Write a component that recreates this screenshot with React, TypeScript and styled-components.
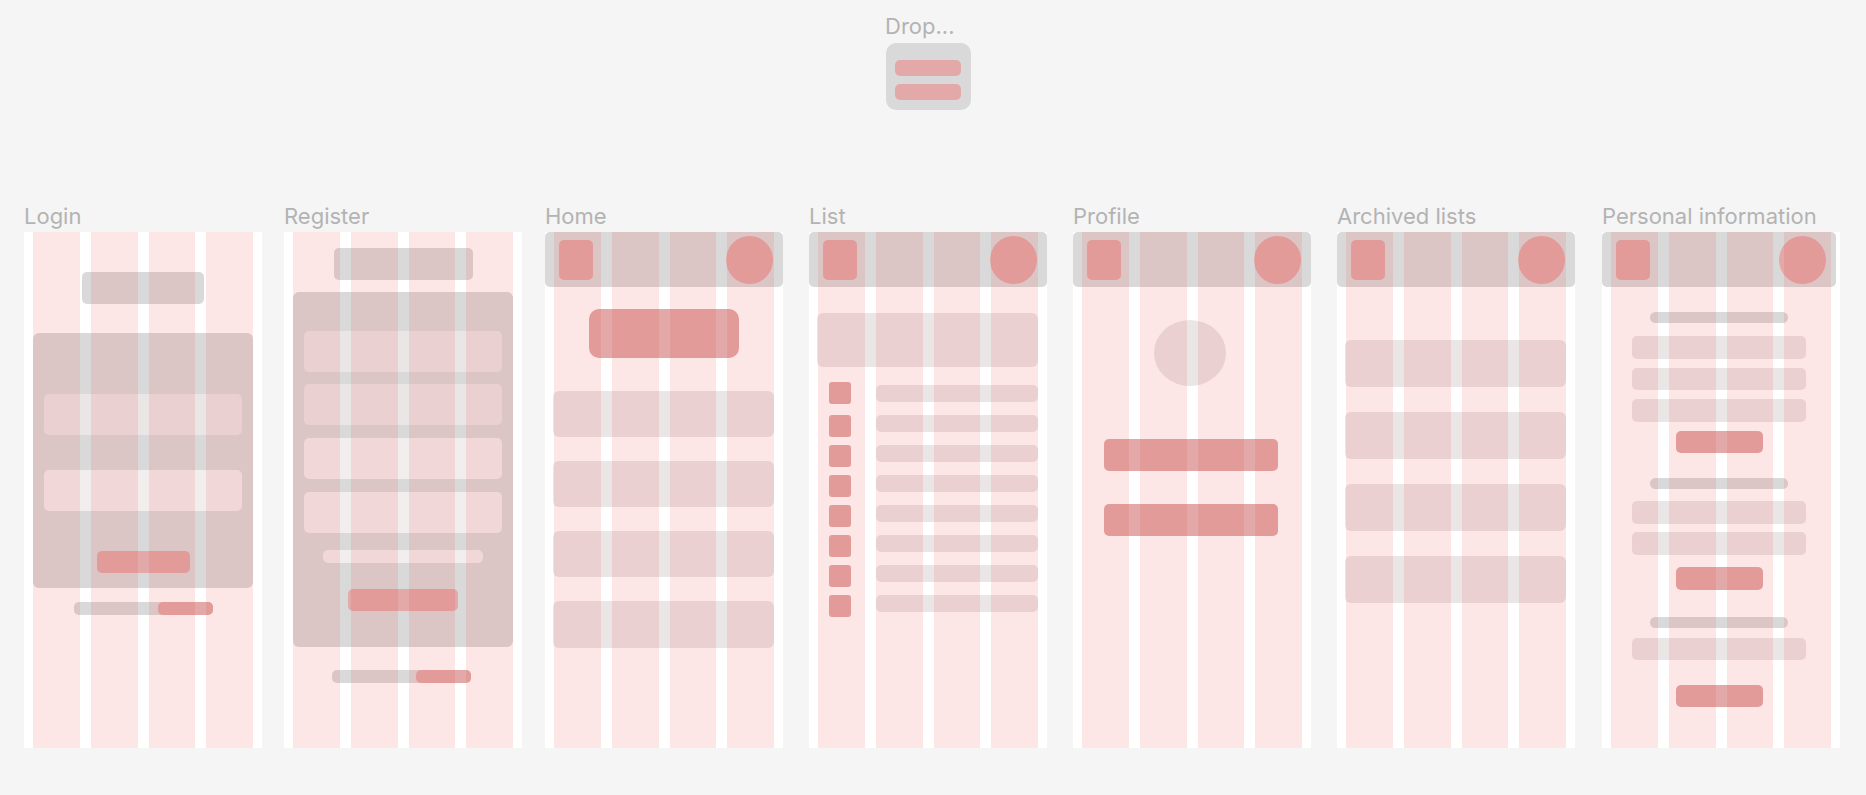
import React from 'react';
import styled, { createGlobalStyle } from 'styled-components';

const GRAY = '#d9d9d9';
const RED = '#e3a9a8';
const SOFT = '#ebe6e6';
const PALE = '#f3eeee';

const GlobalStyle = createGlobalStyle`
  html, body {
    margin: 0;
    background: #f5f5f5;
  }
  body {
    font-family: Inter, "Noto Sans", sans-serif;
  }
  * { box-sizing: border-box; }
`;

const Canvas = styled.div`
  min-height: 100vh;
  padding-top: 13px;
`;

const Label = styled.div`
  font-size: 22px;
  line-height: 26px;
  color: #b3b3b3;
  white-space: nowrap;
`;

const DropArea = styled.div`
  display: flex;
  flex-direction: column;
  align-items: flex-start;
  padding-left: 885px;
`;

const DropBox = styled.div`
  margin: 4px 0 0 1px;
  width: 85px;
  height: 67px;
  border-radius: 10px;
  background: ${GRAY};
  padding: 17px 10px 0 9px;
  display: flex;
  flex-direction: column;
  gap: 8px;
`;

const DropBar = styled.div`
  height: 16px;
  border-radius: 5px;
  background: ${RED};
`;

const ArtboardRow = styled.div`
  display: flex;
  align-items: flex-start;
  margin-top: 93px;
  padding-left: 24px;
`;

const Artboard = styled.div<{ $offset: number }>`
  width: 238px;
  flex-shrink: 0;
  margin-left: ${p => p.$offset}px;
  display: flex;
  flex-direction: column;
  gap: 3px;
`;

const Frame = styled.div<{ $center?: boolean }>`
  position: relative;
  width: 238px;
  height: 516px;
  background: #fff;
  overflow: hidden;
  display: flex;
  flex-direction: column;
  align-items: ${p => (p.$center ? 'center' : 'stretch')};
  padding-right: ${p => (p.$center ? 4 : 0)}px;
  & > * { flex-shrink: 0; }
`;

// layout grid drawn over the frame content, like the design tool does
const GridOverlay = styled.div`
  position: absolute;
  inset: 0;
  display: grid;
  grid-template-columns: repeat(4, 1fr);
  column-gap: 11px;
  padding: 0 9px;
  pointer-events: none;
`;

const GridColumn = styled.div`
  background: rgba(230, 60, 60, 0.13);
`;

const Header = styled.div`
  align-self: stretch;
  height: 55px;
  border-radius: 5px;
  background: ${GRAY};
  display: flex;
  align-items: center;
  justify-content: space-between;
  padding: 0 10px 0 14px;
`;

const MenuTile = styled.div`
  width: 34px;
  height: 40px;
  border-radius: 5px;
  background: ${RED};
`;

const Avatar = styled.div`
  width: 47px;
  height: 48px;
  border-radius: 50%;
  background: ${RED};
`;

const TitleBar = styled.div<{ $mt: number; $w: number }>`
  align-self: center;
  margin-top: ${p => p.$mt}px;
  width: ${p => p.$w}px;
  height: 32px;
  border-radius: 5px;
  background: ${GRAY};
`;

const Panel = styled.div<{ $mt: number; $h: number }>`
  margin: ${p => p.$mt}px 9px 0;
  height: ${p => p.$h}px;
  border-radius: 6px;
  background: ${GRAY};
  padding: 0 11px;
  display: flex;
  flex-direction: column;
  align-items: center;
  & > * { flex-shrink: 0; }
`;

const Field = styled.div<{ $mt: number; $pale?: boolean }>`
  align-self: stretch;
  margin-top: ${p => p.$mt}px;
  height: 41px;
  border-radius: 5px;
  background: ${p => (p.$pale ? PALE : SOFT)};
`;

const Hint = styled.div<{ $mt: number }>`
  margin-top: ${p => p.$mt}px;
  width: 160px;
  height: 12.8px;
  border-radius: 5px;
  background: ${PALE};
`;

const Button = styled.div<{ $mt: number; $w: number; $h: number; $ml?: number; $r?: number }>`
  align-self: ${p => (p.$ml === undefined ? 'center' : 'flex-start')};
  margin-top: ${p => p.$mt}px;
  margin-left: ${p => p.$ml ?? 0}px;
  width: ${p => p.$w}px;
  height: ${p => p.$h}px;
  border-radius: ${p => p.$r ?? 5}px;
  background: ${RED};
`;

const LinkBar = styled.div<{ $mt: number; $shift?: number }>`
  align-self: center;
  margin-top: ${p => p.$mt}px;
  margin-left: ${p => -(p.$shift ?? 0) * 2}px;
  width: 139px;
  height: 13.4px;
  border-radius: 5px;
  background: ${GRAY};
  display: flex;
  justify-content: flex-end;
`;

const LinkAccent = styled.div`
  width: 55px;
  border-radius: 5px;
  background: ${RED};
`;

const ListCard = styled.div<{ $mt: number; $h: number }>`
  margin: ${p => p.$mt}px 9px 0 8px;
  height: ${p => p.$h}px;
  border-radius: 6px;
  background: ${SOFT};
`;

const Rows = styled.div`
  margin-top: 17.5px;
  padding: 0 9px 0 20px;
  display: flex;
  flex-direction: column;
  gap: 8px;
`;

const ItemRow = styled.div<{ $lead?: boolean }>`
  height: 22px;
  display: flex;
  align-items: flex-start;
  gap: 25px;
  & > :first-child {
    margin-top: ${p => (p.$lead ? -2.5 : 0)}px;
  }
`;

const Checkbox = styled.div`
  width: 22px;
  height: 22px;
  flex-shrink: 0;
  border-radius: 3px;
  background: ${RED};
`;

const ItemLine = styled.div`
  flex: 1;
  height: 17px;
  border-radius: 5px;
  background: ${SOFT};
`;

const Portrait = styled.div`
  align-self: flex-start;
  margin: 33px 0 0 81px;
  width: 72px;
  height: 66px;
  border-radius: 50%;
  background: ${SOFT};
`;

const Caption = styled.div<{ $mt: number }>`
  margin-top: ${p => p.$mt}px;
  width: 138px;
  height: 11.3px;
  border-radius: 6px;
  background: ${GRAY};
`;

const InfoField = styled.div<{ $mt: number }>`
  margin-top: ${p => p.$mt}px;
  width: 174px;
  height: 22.5px;
  border-radius: 5px;
  background: ${SOFT};
`;

const Grid = () => (
  <GridOverlay>
    <GridColumn />
    <GridColumn />
    <GridColumn />
    <GridColumn />
  </GridOverlay>
);

const AppHeader = () => (
  <Header>
    <MenuTile />
    <Avatar />
  </Header>
);

const Login = () => (
  <>
    <TitleBar $mt={40} $w={122} />
    <Panel $mt={29} $h={254.6}>
      <Field $mt={60.7} />
      <Field $mt={35.4} $pale />
      <Button $mt={40} $w={93} $h={21.5} />
    </Panel>
    <LinkBar $mt={14.3}>
      <LinkAccent />
    </LinkBar>
  </>
);

const Register = () => (
  <>
    <TitleBar $mt={16.1} $w={139} />
    <Panel $mt={12.1} $h={354.6}>
      <Field $mt={38.6} />
      <Field $mt={12.5} />
      <Field $mt={12.5} $pale />
      <Field $mt={12.8} $pale />
      <Hint $mt={17.9} />
      <Button $mt={26.1} $w={110} $h={21.8} />
    </Panel>
    <LinkBar $mt={22.9} $shift={1.3}>
      <LinkAccent />
    </LinkBar>
  </>
);

const Home = () => (
  <>
    <AppHeader />
    <Button $mt={21.5} $w={150} $h={49} $r={10} />
    <ListCard $mt={33.6} $h={46.4} />
    <ListCard $mt={23.6} $h={46.4} />
    <ListCard $mt={23.6} $h={46.4} />
    <ListCard $mt={24} $h={46.4} />
  </>
);

const List = () => (
  <>
    <AppHeader />
    <ListCard $mt={25.8} $h={54.6} />
    <Rows>
      {Array.from({ length: 8 }).map((_, i) => (
        <ItemRow key={i} $lead={i === 0}>
          <Checkbox />
          <ItemLine />
        </ItemRow>
      ))}
    </Rows>
  </>
);

const Profile = () => (
  <>
    <AppHeader />
    <Portrait />
    <Button $mt={53.2} $ml={31} $w={174} $h={32} />
    <Button $mt={32.9} $ml={31} $w={174} $h={32} />
  </>
);

const Archived = () => (
  <>
    <AppHeader />
    <ListCard $mt={52.9} $h={46.8} />
    <ListCard $mt={25.3} $h={46.8} />
    <ListCard $mt={25.3} $h={46.8} />
    <ListCard $mt={25.4} $h={46.8} />
  </>
);

const Personal = () => (
  <>
    <AppHeader />
    <Caption $mt={25} />
    <InfoField $mt={12.9} />
    <InfoField $mt={9.3} />
    <InfoField $mt={8.9} />
    <Button $mt={9.2} $w={87} $h={22.2} />
    <Caption $mt={24.6} />
    <InfoField $mt={12.2} />
    <InfoField $mt={8.6} />
    <Button $mt={12.5} $w={87} $h={22.2} />
    <Caption $mt={27.5} />
    <InfoField $mt={9.3} />
    <Button $mt={24.3} $w={87} $h={22.2} />
  </>
);

const screens = [
  { title: 'Login', offset: 0, body: <Login /> },
  { title: 'Register', offset: 22, body: <Register /> },
  { title: 'Home', offset: 23, body: <Home /> },
  { title: 'List', offset: 26, body: <List /> },
  { title: 'Profile', offset: 26, body: <Profile /> },
  { title: 'Archived lists', offset: 26, body: <Archived /> },
  { title: 'Personal information', offset: 27, body: <Personal />, center: true },
];

const App = () => (
  <>
    <GlobalStyle />
    <Canvas>
      <DropArea>
        <Label>Drop...</Label>
        <DropBox>
          <DropBar />
          <DropBar />
        </DropBox>
      </DropArea>
      <ArtboardRow>
        {screens.map(s => (
          <Artboard key={s.title} $offset={s.offset}>
            <Label>{s.title}</Label>
            <Frame $center={s.center}>
              {s.body}
              <Grid />
            </Frame>
          </Artboard>
        ))}
      </ArtboardRow>
    </Canvas>
  </>
);

export default App;
